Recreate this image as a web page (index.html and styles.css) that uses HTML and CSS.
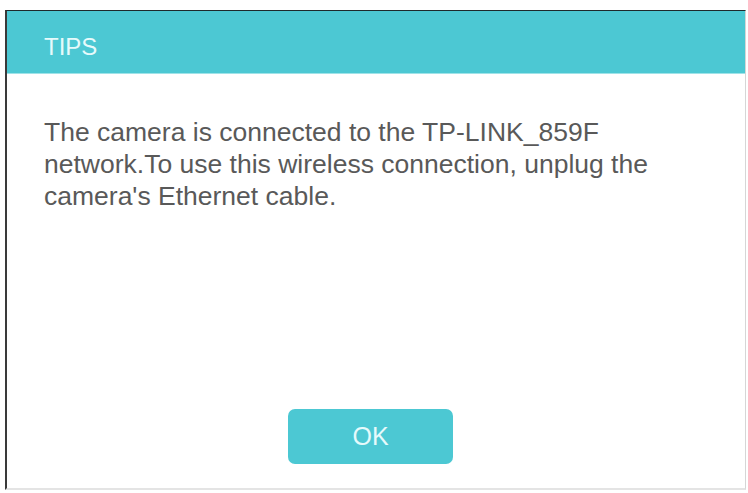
FILE: index.html
```html
<!DOCTYPE html>
<html lang="en">
  <head>
    <meta charset="UTF-8">
    <title>Tips</title>
    <meta name="viewport" content="width=device-width, initial-scale=1">
    <link rel="stylesheet" href="styles.css">
  </head>
  <body>
    <div class="dialog" role="dialog" aria-labelledby="dialog-title">
      <div class="dialog-header">
        <h2 id="dialog-title">TIPS</h2>
      </div>
      <div class="dialog-body">
        <p>
          The camera is connected to the TP-LINK_859F<br>
          network.To use this wireless connection, unplug the<br>
          camera's Ethernet cable.
        </p>
      </div>
      <div class="dialog-footer">
        <button type="button" class="btn-ok">OK</button>
      </div>
    </div>
  </body>
</html>
```

FILE: styles.css
```css
body {
  margin: 0;
  background: #fff;
  font-family: "Liberation Sans", Arial, sans-serif;
}

.dialog {
  margin: 10px 2px 0 5px;
  height: 480px;
  box-sizing: border-box;
  border-top: 1px solid #1e2a2c;
  border-left: 2px solid #3a3a3a;
  border-right: 1px solid #d6d6d6;
  border-bottom: 2px solid #e4e4e4;
  display: flex;
  flex-direction: column;
}

.dialog-header {
  background: #4cc8d3;
  height: 63px;
  box-sizing: border-box;
  padding: 9px 37px 0;
  display: flex;
  align-items: center;
  border-bottom: 1px solid #9fe3e8;
}

.dialog-header h2 {
  margin: 0;
  font-size: 24px;
  font-weight: normal;
  color: #e6fafb;
}

.dialog-body {
  flex: 1;
  padding: 42px 37px 0;
}

.dialog-body p {
  margin: 0;
  font-size: 26.5px;
  line-height: 32px;
  color: #595959;
}

.dialog-footer {
  display: flex;
  justify-content: center;
  padding-bottom: 24px;
}

.btn-ok {
  width: 165px;
  height: 55px;
  margin-right: 11px;
  border: none;
  border-radius: 7px;
  background: #4cc8d3;
  color: #e6fafb;
  font-family: inherit;
  font-size: 25px;
}
```
